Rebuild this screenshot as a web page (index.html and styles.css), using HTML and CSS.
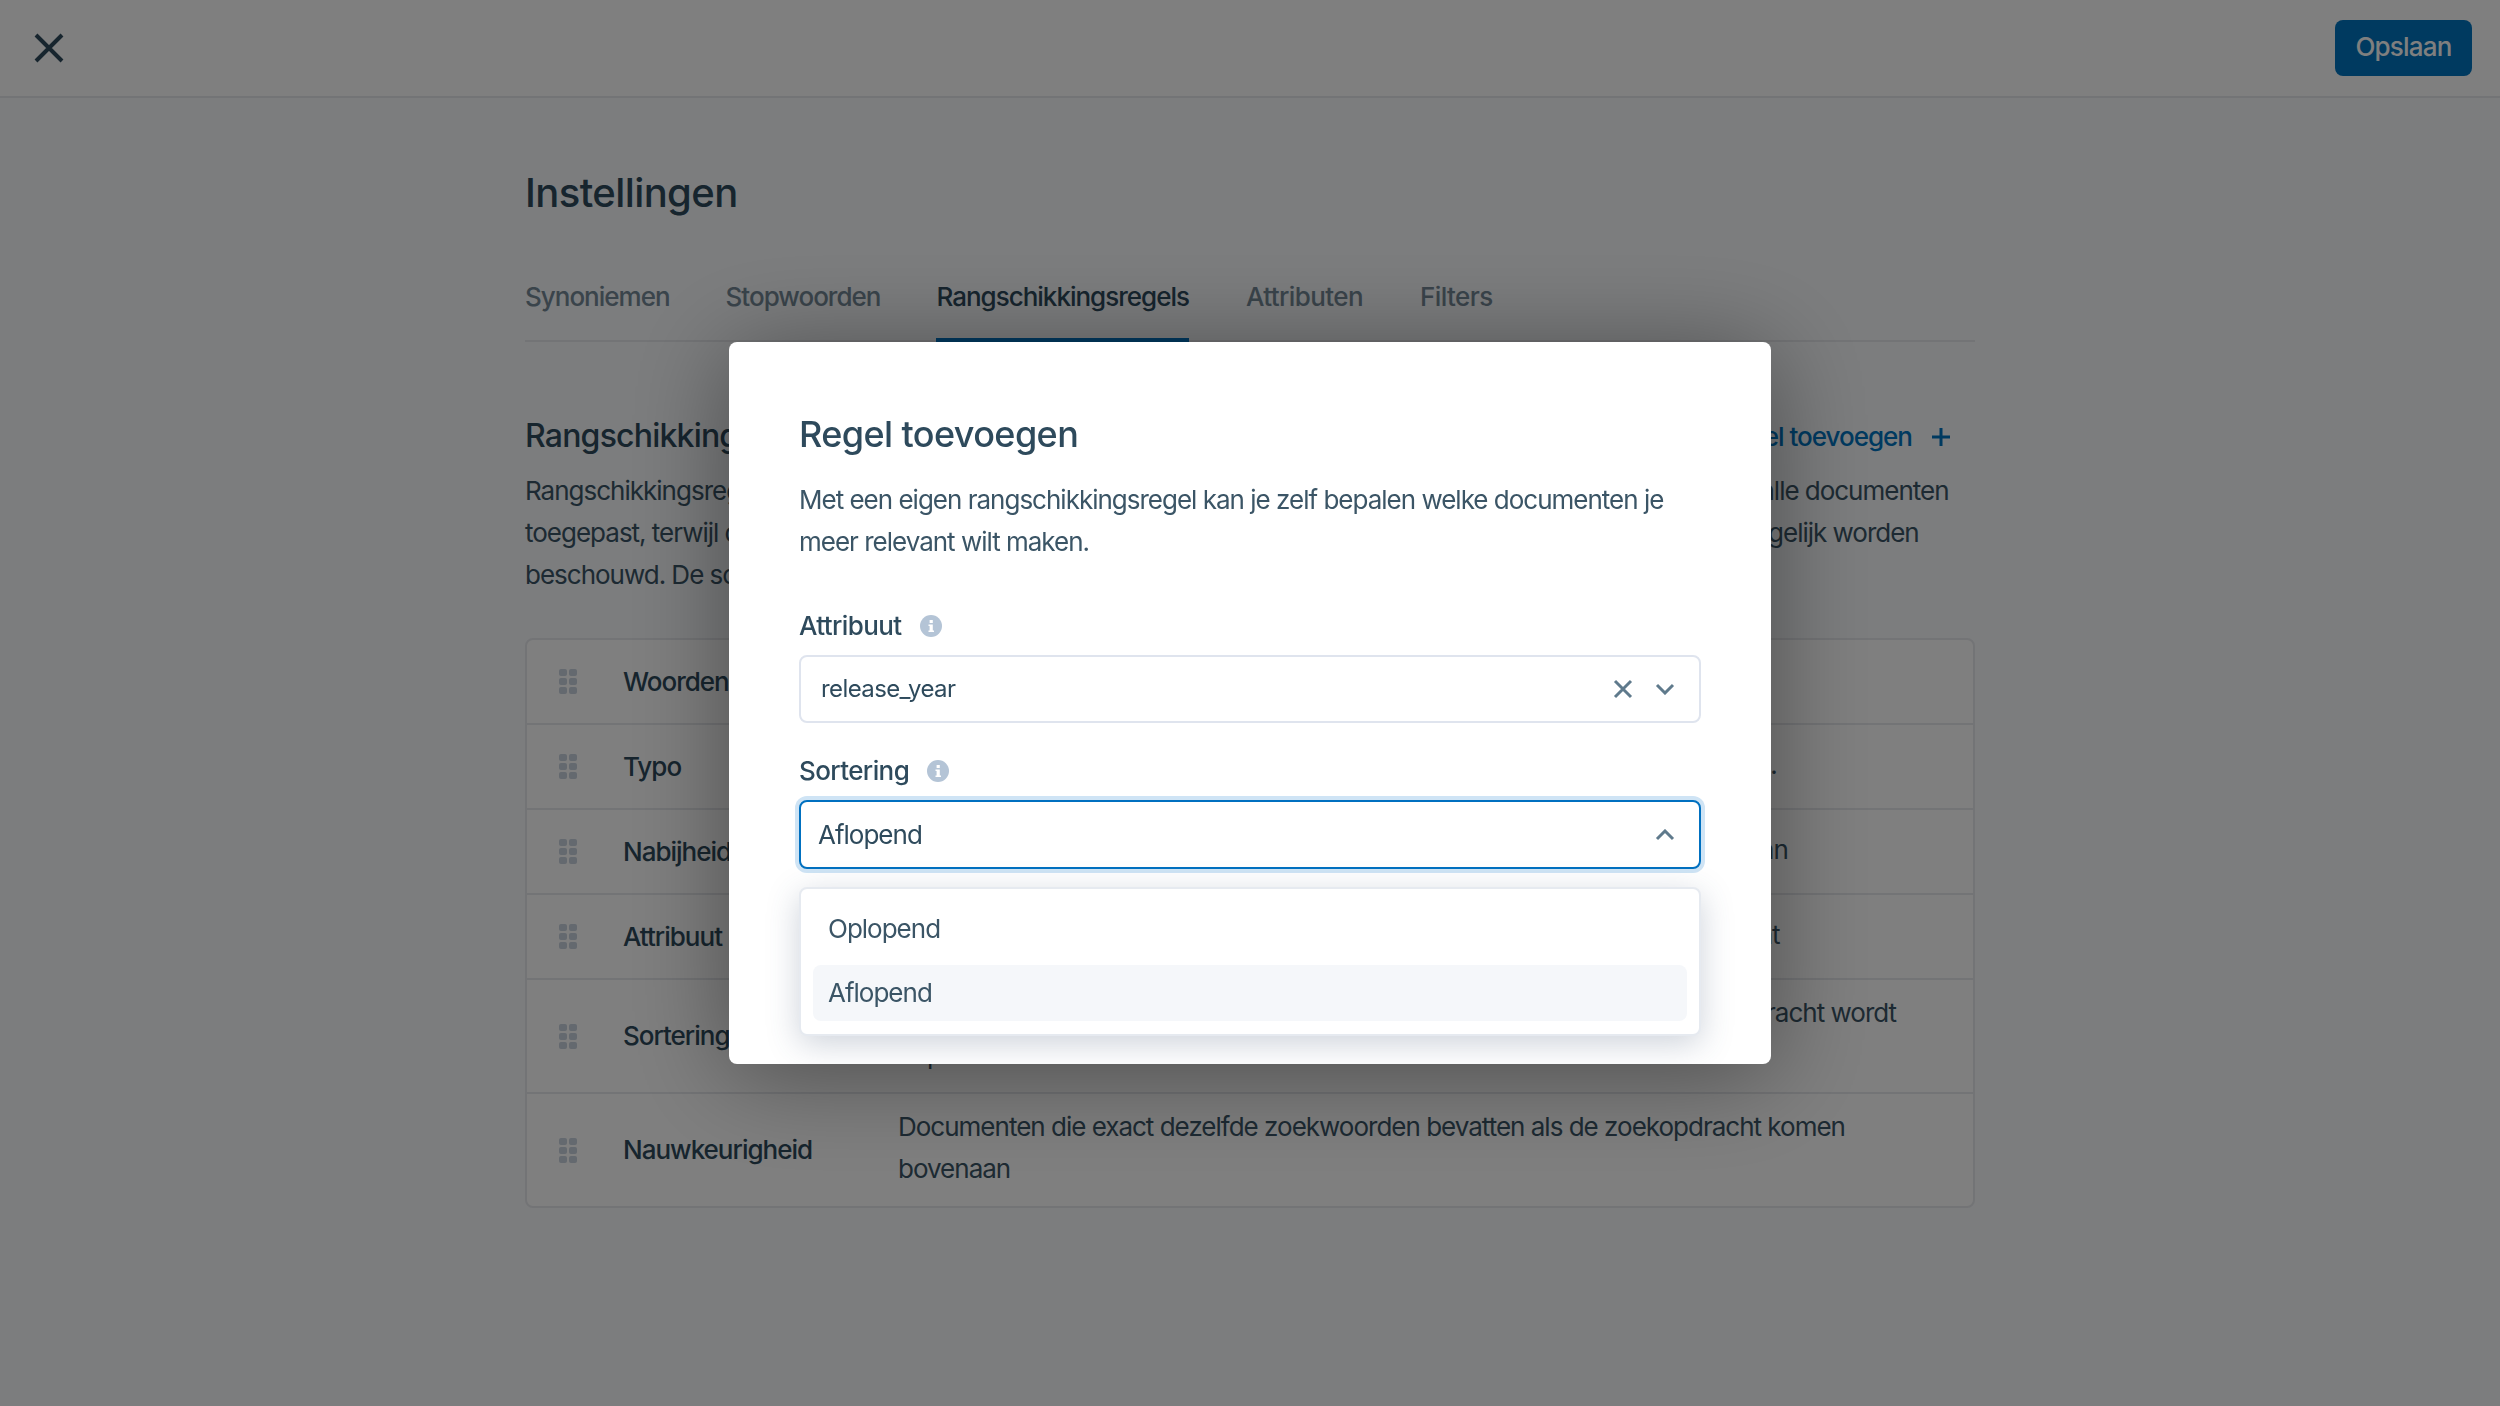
FILE: index.html
```html
<!DOCTYPE html>
<html lang="nl">
<head>
  <meta charset="UTF-8" />
  <meta name="viewport" content="width=device-width, initial-scale=1.0"/>
  <title>Instellingen</title>
  <link rel="stylesheet" href="styles.css">
</head>
<body>
  <header class="topbar">
    <button class="close-btn" aria-label="Sluiten">
      <svg width="30" height="30" viewBox="0 0 30 30"><path d="M2 2 L28 28 M28 2 L2 28" /></svg>
    </button>
    <button class="save-btn">Opslaan</button>
  </header>

  <main class="container">
    <h1>Instellingen</h1>
    <nav class="tabs">
      <a href="#">Synoniemen</a>
      <a href="#">Stopwoorden</a>
      <a href="#" class="active">Rangschikkingsregels</a>
      <a href="#">Attributen</a>
      <a href="#">Filters</a>
    </nav>

    <div class="section-head">
      <h2>Rangschikkingsregels</h2>
      <a href="#" class="add-link">Regel toevoegen
        <svg width="20" height="20" viewBox="0 0 20 20"><path d="M10 1 V19 M1 10 H19" /></svg>
      </a>
    </div>
    <p class="intro">Rangschikkingsregels bepalen de volgorde van de zoekresultaten. Ze gaan in volgorde van belangrijkheid op alle documenten<br>toegepast, terwijl de volgende regel alleen wordt gebruikt als de documenten door de vorige regel als volledig gelijk worden<br>beschouwd. De sortering kan je aanpassen.</p>

    <div class="rules">
      <div class="rule">
        <span class="handle"><i></i><i></i><i></i><i></i><i></i><i></i></span>
        <strong>Woorden</strong>
        <span class="desc">Documenten met een groter aantal zoekwoorden komen eerst</span>
      </div>
      <div class="rule">
        <span class="handle"><i></i><i></i><i></i><i></i><i></i><i></i></span>
        <strong>Typo</strong>
        <span class="desc">Documenten met het kleinste aantal typefouten komen als eerste in die lijsten.</span>
      </div>
      <div class="rule">
        <span class="handle"><i></i><i></i><i></i><i></i><i></i><i></i></span>
        <strong>Nabijheid</strong>
        <span class="desc">Documenten met zoekwoorden dat dicht bij elkaar staan komen dan bovenaan</span>
      </div>
      <div class="rule">
        <span class="handle"><i></i><i></i><i></i><i></i><i></i><i></i></span>
        <strong>Attribuut</strong>
        <span class="desc">Documenten van zoekwoorden in een belangrijk attribuut komen eerst terecht</span>
      </div>
      <div class="rule">
        <span class="handle"><i></i><i></i><i></i><i></i><i></i><i></i></span>
        <strong>Sortering</strong>
        <span class="desc">Documenten worden gesorteerd op de gekozen attribuut waarin de zoekopdracht wordt<br>bepaald.</span>
      </div>
      <div class="rule">
        <span class="handle"><i></i><i></i><i></i><i></i><i></i><i></i></span>
        <strong>Nauwkeurigheid</strong>
        <span class="desc">Documenten die exact dezelfde zoekwoorden bevatten als de zoekopdracht komen<br>bovenaan</span>
      </div>
    </div>
  </main>

  <div class="overlay">
    <div class="modal">
      <h3>Regel toevoegen</h3>
      <p>Met een eigen rangschikkingsregel kan je zelf bepalen welke documenten je<br>meer relevant wilt maken.</p>

      <label class="field-label">Attribuut
        <svg class="info" width="22" height="22" viewBox="0 0 22 22"><circle cx="11" cy="11" r="11" /><path d="M8.5 9.5 H12.8 V15.5 H14 V17 H8.5 V15.5 H9.6 V11 H8.5 Z" /><rect x="9.6" y="5" width="3.2" height="3" /></svg>
      </label>
      <div class="select">
        <span class="value mono">release_year</span>
        <svg class="clear" width="20" height="20" viewBox="0 0 20 20"><path d="M2 2 L18 18 M18 2 L2 18" /></svg>
        <svg class="chev" width="20" height="12" viewBox="0 0 20 12"><path d="M2 2 L10 10 L18 2" /></svg>
      </div>

      <label class="field-label">Sortering
        <svg class="info" width="22" height="22" viewBox="0 0 22 22"><circle cx="11" cy="11" r="11" /><path d="M8.5 9.5 H12.8 V15.5 H14 V17 H8.5 V15.5 H9.6 V11 H8.5 Z" /><rect x="9.6" y="5" width="3.2" height="3" /></svg>
      </label>
      <div class="select focused">
        <span class="value">Aflopend</span>
        <svg class="chev" width="20" height="12" viewBox="0 0 20 12"><path d="M2 10 L10 2 L18 10" /></svg>
      </div>

      <ul class="options">
        <li>Oplopend</li>
        <li class="selected">Aflopend</li>
      </ul>
    </div>
  </div>
</body>
</html>
```

FILE: styles.css
```css
* { box-sizing: border-box; }
html, body { height: 100%; }
body { margin: 0; font-family: Inter, "Liberation Sans", sans-serif; font-size: 26px; line-height: 42px; letter-spacing: -1px; background: #f8fafc; color: #3b5566; overflow: hidden; }
a { text-decoration: none; color: inherit; }

.topbar { height: 98px; background: #fff; border-bottom: 2px solid #e6e8ec; display: flex; align-items: center; justify-content: space-between; padding: 0 28px 0 34px; }
.close-btn { border: none; background: none; padding: 0; width: 30px; height: 30px; }
.close-btn svg path { stroke: #2e4a5c; stroke-width: 4; fill: none; }
.save-btn { height: 56px; width: 137px; padding: 0 0 3px; border: none; border-radius: 8px; background: #0074c0; color: #fff; font: 500 26px Inter, sans-serif; letter-spacing: -0.8px; }

.container { width: 1450px; margin: 0 auto; }
h1 { margin: 70px 0 0; font-size: 40px; line-height: 50px; font-weight: 500; letter-spacing: -0.6px; color: #2e4a5c; }
.tabs { display: flex; gap: 56px; margin-top: 46px; border-bottom: 2px solid #e6e8ec; height: 78px; }
.tabs a { height: 78px; padding-top: 12px; font-weight: 500; color: #748896; }
.tabs a:nth-child(n+4) { margin-left: 1px; letter-spacing: -0.6px; }
.tabs a.active { color: #2e4a5c; border-bottom: 4px solid #0074c0; }

.section-head { display: flex; justify-content: space-between; align-items: center; margin-top: 72px; }
h2 { margin: 0; font-size: 32px; line-height: 40px; font-weight: 500; letter-spacing: -0.8px; color: #2e4a5c; }
.add-link { display: flex; align-items: center; gap: 19px; padding: 2px 24px 0 0; color: #0074c0; font-weight: 500; }
.add-link svg path { stroke: #0074c0; stroke-width: 3; }
.intro { margin: 12px 0 0; white-space: nowrap; word-spacing: -0.15px; }

.rules { margin-top: 42px; background: #fff; border: 2px solid #e6e8ec; border-radius: 8px; }
.rule { display: flex; align-items: center; min-height: 85px; padding: 12px 0; border-bottom: 2px solid #e6e8ec; }
.rule:last-child { border-bottom: none; }
.handle { display: grid; flex: none; grid-template-columns: 8px 8px; grid-auto-rows: 7px; gap: 2px; margin: 0 46px 0 32px; }
.handle i { background: #c8d2de; border-radius: 2px; }
.rule strong { flex: none; width: 275px; font-weight: 500; color: #2e4a5c; }
.desc { white-space: nowrap; margin-bottom: 4px; }

.overlay { position: fixed; inset: 0; background: rgba(0, 0, 0, .5); }
.modal { position: absolute; left: 729px; top: 342px; width: 1042px; height: 722px; padding: 70px; background: #fff; border-radius: 8px; box-shadow: 0 10px 100px rgba(0, 0, 0, .4); overflow: hidden; }
.modal h3 { margin: 0; font-size: 36px; line-height: 44px; font-weight: 500; letter-spacing: -0.6px; color: #2e4a5c; }
.modal p { margin: 23px 0 0; }
.field-label { display: flex; align-items: center; gap: 18px; margin-top: 42px; font-weight: 500; letter-spacing: -0.6px; color: #2e4a5c; }
.select + .field-label { margin-top: 27px; }
.info circle { fill: #b4c4d6; }
.info rect, .info path { fill: #fff; }
.select { display: flex; align-items: center; height: 68px; margin-top: 8px; padding: 0 24px 0 20px; background: #fff; border: 2px solid #dfe4ee; border-radius: 8px; color: #2e4a5c; }
.select .value { flex: 1; }
.select .mono { font-size: 24px; letter-spacing: -0.6px; }
.select.focused { height: 69px; border-color: #0070c0; box-shadow: 0 0 0 4px #cfe4f5; padding-left: 17px; }
.select svg path { stroke: #5f7a8c; stroke-width: 3; fill: none; }
.select .clear { margin-right: 22px; }
.options { list-style: none; margin: 18px 0 0; padding: 12px; height: 149px; background: #fff; border: 2px solid #e6eaf0; border-radius: 8px; box-shadow: 0 8px 32px rgba(60, 80, 110, .25); }
.options li { height: 56px; line-height: 56px; padding-left: 15px; border-radius: 8px; margin-bottom: 8px; }
.options li.selected { background: #f5f7fa; }
```
